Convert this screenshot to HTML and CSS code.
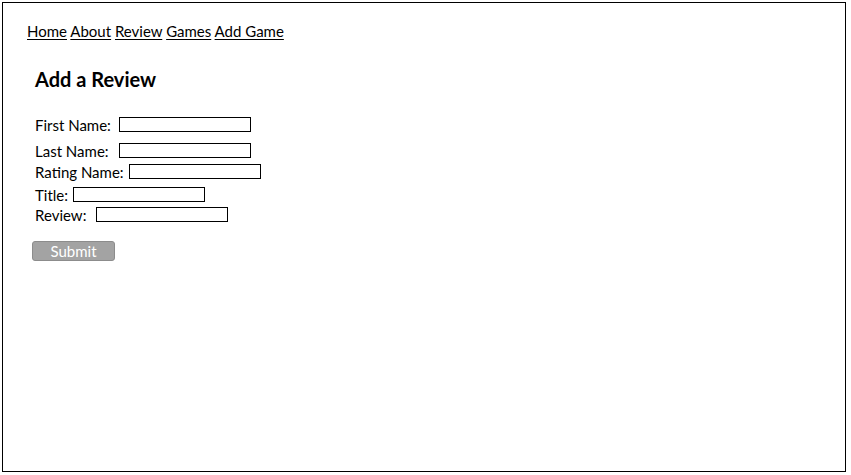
FILE: index.html
```html
<!DOCTYPE html>
<html>
<head>
<meta charset="utf-8">
<link rel="stylesheet" href="styles.css">
</head>
<body>
<div class="frame">
  <nav class="nav">
    <a href="#">Home</a> <a href="#">About</a> <a href="#">Review</a> <a href="#">Games</a> <a href="#">Add Game</a>
  </nav>
  <main class="content">
    <h1 class="title">Add a Review</h1>
    <form class="form">
      <div class="row r1"><label>First Name:</label><input class="field" type="text"></div>
      <div class="row r2"><label>Last Name:</label><input class="field" type="text"></div>
      <div class="row r3"><label>Rating Name:</label><input class="field" type="text"></div>
      <div class="row r4"><label>Title:</label><input class="field" type="text"></div>
      <div class="row r5"><label>Review:</label><input class="field" type="text"></div>
      <button class="submit" type="button">Submit</button>
    </form>
  </main>
</div>
</body>
</html>
```
FILE: styles.css
```css
html, body {
  margin: 0;
  padding: 0;
  background: #fff;
}
body {
  font-family: Lato, "Open Sans", sans-serif;
  color: #000;
}
.frame {
  margin: 2px 0 0 2px;
  width: 842px;
  height: 468px;
  border: 1px solid #000;
  box-sizing: content-box;
}
.nav {
  padding: 19px 0 0 24px;
  font-size: 15px;
  line-height: 18px;
}
.nav a {
  color: #000;
  text-decoration: underline;
  text-underline-offset: 2px;
}
.content {
  padding-left: 32px;
}
.title {
  margin: 27px 0 0 0;
  font-size: 20px;
  line-height: 24px;
  font-weight: 700;
}
.form {
  margin-top: 25px;
  font-size: 15px;
}
.row {
  display: flex;
  align-items: flex-end;
  height: 18px;
}
.row label {
  line-height: 18px;
}
.field {
  width: 132px;
  height: 15px;
  box-sizing: border-box;
  border: 1px solid #000;
  margin: 0 0 2px 0;
  padding: 0;
  background: #fff;
}
.r1 .field { margin-left: 8px; }
.r2 { margin-top: 8px; }
.r2 .field { margin-left: 10px; }
.r3 { margin-top: 3px; }
.r3 .field { margin-left: 5px; }
.r4 { margin-top: 5px; }
.r4 .field { margin-left: 5px; }
.r5 { margin-top: 2px; }
.r5 .field { margin-left: 10px; }
.submit {
  display: block;
  margin: 17px 0 0 -3px;
  width: 83px;
  height: 20px;
  padding: 0;
  background: #a3a3a3;
  border: 1px solid #8c8c8c;
  border-radius: 3px;
  color: #fff;
  font-family: Lato, "Open Sans", sans-serif;
  font-size: 15px;
  line-height: 18px;
}
```
